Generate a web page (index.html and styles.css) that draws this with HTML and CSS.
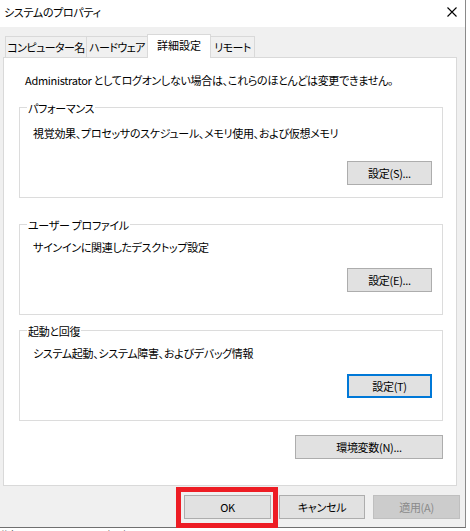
FILE: index.html
```html
<!DOCTYPE html>
<html lang="ja">
<head>
    <meta charset="UTF-8">
    <title>システムのプロパティ</title>
    <link rel="stylesheet" href="styles.css">
</head>
<body>
    <div class="window">
        <div class="titlebar">
            <span class="title">システムのプロパティ</span>
            <svg class="close" width="10" height="10" viewBox="0 0 10 10">
                <path d="M0.5 0.5 L9.5 9.5 M9.5 0.5 L0.5 9.5" stroke="#000" stroke-width="1.1" fill="none"/>
            </svg>
        </div>
        <div class="dialog">
            <div class="tabs">
                <div class="tab tab-name">コンピューター名</div>
                <div class="tab tab-hw">ハードウェア</div>
                <div class="tab tab-adv active">詳細設定</div>
                <div class="tab tab-remote">リモート</div>
            </div>
            <div class="panel">
                <p class="note">Administrator としてログオンしない場合は、これらのほとんどは変更できません。</p>

                <div class="group group-perf">
                    <span class="group-title">パフォーマンス</span>
                    <p class="group-text">視覚効果、プロセッサのスケジュール、メモリ使用、および仮想メモリ</p>
                    <div class="group-actions">
                        <button class="btn btn-set">設定(S)...</button>
                    </div>
                </div>

                <div class="group group-profile">
                    <span class="group-title">ユーザー プロファイル</span>
                    <p class="group-text">サインインに関連したデスクトップ設定</p>
                    <div class="group-actions">
                        <button class="btn btn-set">設定(E)...</button>
                    </div>
                </div>

                <div class="group group-startup">
                    <span class="group-title">起動と回復</span>
                    <p class="group-text">システム起動、システム障害、およびデバッグ情報</p>
                    <div class="group-actions">
                        <button class="btn btn-set focused">設定(T)</button>
                    </div>
                </div>

                <div class="env-row">
                    <button class="btn btn-env">環境変数(N)...</button>
                </div>
            </div>
            <div class="footer">
                <span class="highlight"><button class="btn btn-ok">OK</button></span>
                <button class="btn btn-cancel">キャンセル</button>
                <button class="btn btn-apply" disabled>適用(A)</button>
            </div>
        </div>
    </div>
    <div class="behind">
        <span class="behind-name">ルト</span>
        <span class="behind-date">2024/05/07</span>
    </div>
</body>
</html>
```

FILE: styles.css
```css
body {
    margin: 0;
    background-color: #ffffff;
    color: #000;
    font-family: "Noto Sans CJK JP", "Noto Sans", sans-serif;
    font-size: 11px;
    letter-spacing: -0.3px;
    font-feature-settings: "palt";
    overflow: hidden;
}

p {
    margin: 0;
}

.window {
    width: 466px;
    height: 528px;
    box-sizing: border-box;
    border-right: 1px solid #8a8a8a;
    border-bottom: 1px solid #707070;
    background-color: #f0f0f0;
    display: flex;
    flex-direction: column;
}

.titlebar {
    height: 27px;
    flex-shrink: 0;
    background-color: #ffffff;
    display: flex;
    justify-content: space-between;
    align-items: flex-start;
    padding: 4px 8px 0 4px;
    box-sizing: border-box;
}

.title {
    line-height: 16px;
}

.close {
    margin-top: 3px;
}

.dialog {
    flex: 1;
    padding: 7px 0 0 3px;
    display: flex;
    flex-direction: column;
}

.tabs {
    display: flex;
    align-items: flex-end;
    height: 23px;
    margin-left: 2px;
}

.tab {
    height: 21px;
    box-sizing: border-box;
    border: 1px solid #d9d9d9;
    border-bottom: none;
    background-color: #f0f0f0;
    text-align: center;
    line-height: 21px;
    letter-spacing: -0.6px;
    white-space: nowrap;
    margin-left: -1px;
}

.tab-name {
    width: 82px;
    margin-left: 0;
}

.tab-hw {
    width: 62px;
}

.tab-adv {
    width: 64px;
}

.tab-remote {
    width: 45px;
}

.tab.active {
    height: 24px;
    margin-bottom: -1px;
    background-color: #ffffff;
    line-height: 21px;
    letter-spacing: 0;
    position: relative;
    z-index: 1;
}

.panel {
    width: 454px;
    height: 429px;
    box-sizing: border-box;
    border: 1px solid #d9d9d9;
    background-color: #ffffff;
    padding: 14px 13px 0 15px;
}

.note {
    line-height: 16px;
    margin-left: 6px;
}

.group {
    height: 91px;
    box-sizing: border-box;
    border: 1px solid #dcdcdc;
    padding: 0 10px 0 7px;
    display: flex;
    flex-direction: column;
}

.group-title {
    align-self: flex-start;
    margin-top: -8px;
    padding: 0 1px;
    line-height: 16px;
    background-color: #ffffff;
}

.group-text {
    line-height: 16px;
    margin: 6px 0 0 6px;
}

.group-actions {
    display: flex;
    justify-content: flex-end;
    margin-top: 13px;
}

.group-perf {
    margin-top: 19px;
}

.group-perf .group-text {
    margin-top: 9px;
}

.group-perf .group-actions {
    margin-top: 20px;
}

.group-profile {
    margin-top: 26px;
}

.group-startup {
    margin-top: 15px;
}

.btn {
    height: 24px;
    box-sizing: border-box;
    padding: 0;
    border: 1px solid #adadad;
    background-color: #e1e1e1;
    color: #000;
    font-family: inherit;
    font-size: 11px;
    letter-spacing: -0.3px;
    font-feature-settings: "palt";
}

.btn-set {
    width: 85px;
}

.btn.focused {
    border: 2px solid #0078d7;
}

.env-row {
    display: flex;
    justify-content: flex-end;
    margin-top: 14px;
}

.btn-env {
    width: 148px;
}

.footer {
    display: flex;
    justify-content: flex-end;
    align-items: flex-start;
    gap: 8px;
    margin-top: 9px;
    padding-right: 5px;
}

.highlight {
    display: flex;
    border: 5px solid #ed1c24;
    padding: 3px 2px 4px 3px;
    margin: -8px -7px -9px -8px;
}

.btn-ok {
    width: 87px;
}

.btn-cancel {
    width: 86px;
}

.btn-apply {
    width: 87px;
    background-color: #cccccc;
    border-color: #bfbfbf;
    color: #8a8a8a;
}

.behind {
    display: flex;
    margin-top: -2px;
    line-height: 16px;
    color: #333;
}

.behind-name {
    width: 82px;
}
```
